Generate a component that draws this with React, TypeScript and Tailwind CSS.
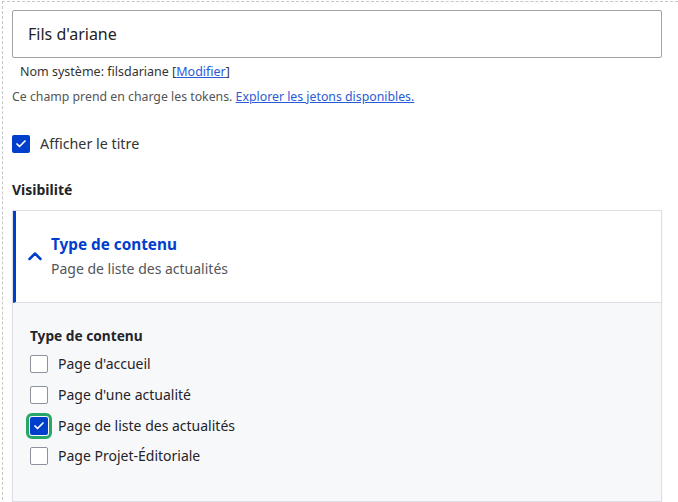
import { Check } from "lucide-react";

type Option = {
  label: string;
  checked: boolean;
  focused?: boolean;
};

const options: Option[] = [
  { label: "Page d'accueil", checked: false },
  { label: "Page d'une actualité", checked: false },
  { label: "Page de liste des actualités", checked: true, focused: true },
  { label: "Page Projet-Éditoriale", checked: false },
];

function Box({ checked, focused }: { checked: boolean; focused?: boolean }) {
  if (checked) {
    return (
      <span
        className={
          focused
            ? "flex h-[18px] w-[18px] shrink-0 items-center justify-center rounded-[2px] bg-[#003ecc] outline-[3px] outline-offset-[1px] outline-[#26a769] outline-solid"
            : "flex h-[18px] w-[18px] shrink-0 items-center justify-center rounded-[2px] bg-[#003ecc]"
        }
      >
        <Check className="h-3 w-3 text-white" strokeWidth={3.5} />
      </span>
    );
  }
  return (
    <span className="block h-[18px] w-[18px] shrink-0 rounded-[2px] border border-[#8e929c] bg-white" />
  );
}

export default function App() {
  return (
    <div className="min-h-screen bg-white font-['Noto_Sans',sans-serif] text-[#232429]">
      <div className="ml-[2px] mt-[1px] border-l border-t border-dashed border-[#c6c6c6] pb-2 pl-[9px] pr-4 pt-2">
        <div className="flex h-[48px] w-[650px] items-center rounded-[2px] border border-[#a3a3a3] px-[15px] text-[16px] text-[#222]">
          Fils d&apos;ariane
        </div>
        <div className="mt-[5px] pl-2 text-[12.5px] text-[#333]">
          Nom système: filsdariane [
          <a className="text-[#2a5bd7] underline" href="#">
            Modifier
          </a>
          ]
        </div>
        <div className="mt-[6px] text-[12.3px] text-[#555]">
          Ce champ prend en charge les tokens.{" "}
          <a className="text-[#2a5bd7] underline" href="#">
            Explorer les jetons disponibles.
          </a>
        </div>

        <label className="mt-[27px] flex items-center gap-[10px] text-[14.3px] text-[#333]">
          <Box checked />
          Afficher le titre
        </label>

        <div className="mt-[24px] text-[14px] font-bold text-[#232429]">
          Visibilité
        </div>

        <div className="mt-[10px] w-[650px] border border-[#dedfe4] shadow-[0_1px_2px_rgba(0,0,0,0.06)]">
          <div className="flex h-[92px] items-center border-b border-[#dedfe4] border-l-[3px] border-l-[#003ecc] bg-white">
            <svg
              className="ml-[11px] h-[14px] w-[16px]"
              viewBox="0 0 16 14"
              fill="none"
              stroke="#003ecc"
              strokeWidth="2.5"
              strokeLinecap="round"
              strokeLinejoin="round"
            >
              <path d="M2.5 10 8 4.5 13.5 10" />
            </svg>
            <div className="ml-[8px]">
              <div className="text-[15.3px] font-bold leading-[20px] text-[#003ecc]">
                Type de contenu
              </div>
              <div className="mt-[6px] text-[14px] leading-[18px] text-[#55565b]">
                Page de liste des actualités
              </div>
            </div>
          </div>

          <div className="h-[198px] bg-[#f7f8fa] px-[17px] pt-[23px]">
            <div className="text-[13.7px] font-bold text-[#232429]">
              Type de contenu
            </div>
            <div className="mt-[9px] flex flex-col gap-[12.7px]">
              {options.map((opt) => (
                <label
                  key={opt.label}
                  className="flex items-center gap-[10px] text-[14px] leading-[18px] text-[#232429]"
                >
                  <Box checked={opt.checked} focused={opt.focused} />
                  {opt.label}
                </label>
              ))}
            </div>
          </div>
        </div>
      </div>
    </div>
  );
}
